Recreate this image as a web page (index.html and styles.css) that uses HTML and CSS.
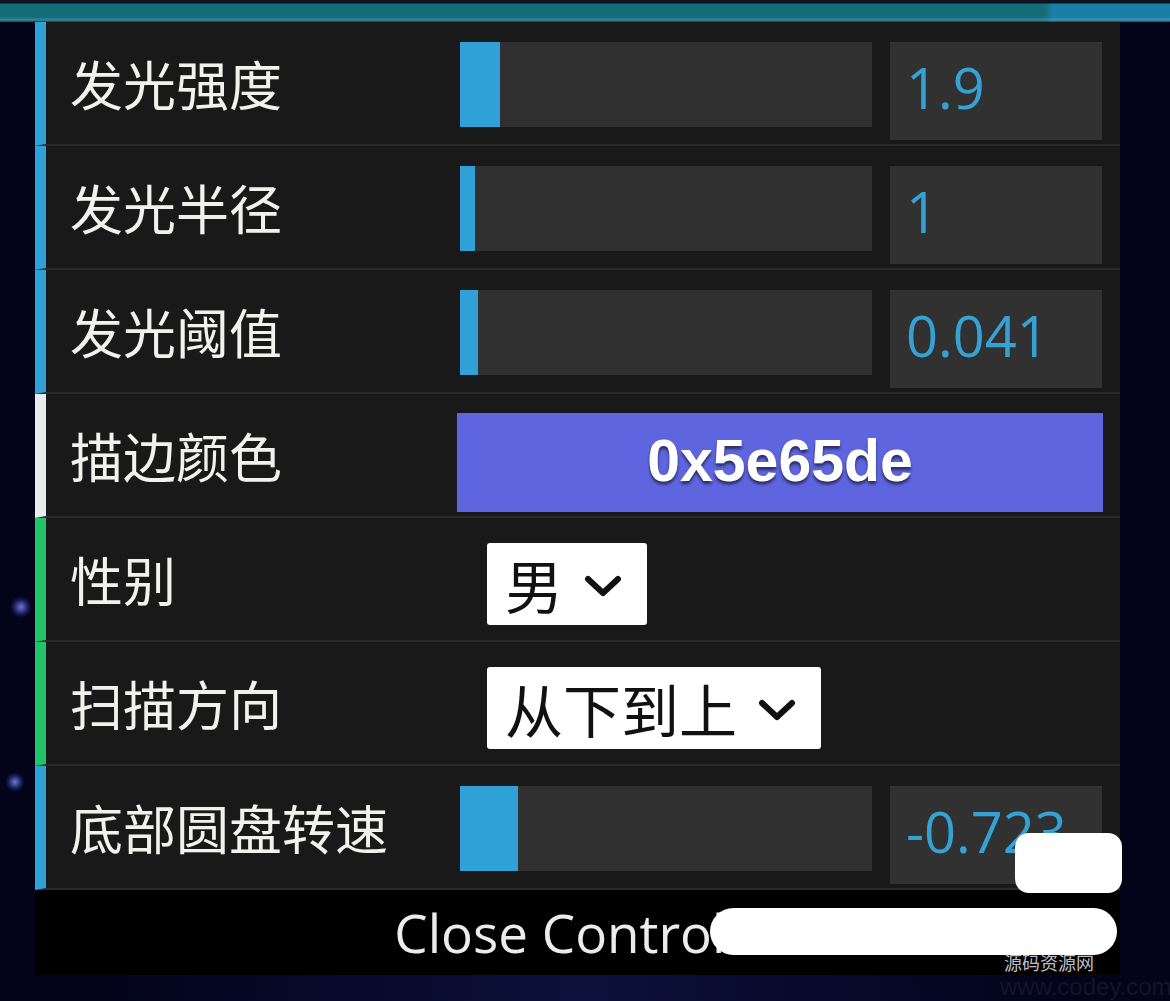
FILE: index.html
```html
<!DOCTYPE html>
<html lang="zh-CN">
<head>
<meta charset="utf-8">
<title>dat.GUI</title>
<link rel="stylesheet" href="styles.css">
</head>
<body>
<div class="stage">
  <div class="topband"></div>
  <span class="star star-a"></span>
  <span class="star star-b"></span>
  <div class="panel">
    <div class="row row-number">
      <div class="label">发光强度</div>
      <div class="ctrl">
        <div class="slider"><div class="fg" style="width:40px"></div></div>
        <div class="num">1.9</div>
      </div>
    </div>
    <div class="row row-number">
      <div class="label">发光半径</div>
      <div class="ctrl">
        <div class="slider"><div class="fg" style="width:15px"></div></div>
        <div class="num">1</div>
      </div>
    </div>
    <div class="row row-number">
      <div class="label">发光阈值</div>
      <div class="ctrl">
        <div class="slider"><div class="fg" style="width:18px"></div></div>
        <div class="num">0.041</div>
      </div>
    </div>
    <div class="row row-color">
      <div class="label">描边颜色</div>
      <div class="ctrl-color">
        <div class="swatch">0x5e65de</div>
      </div>
    </div>
    <div class="row row-option">
      <div class="label">性别</div>
      <div class="ctrl-select">
        <div class="select">男<svg class="chev" viewBox="0 0 40 24"><path d="M5 5 L20 19 L35 5" /></svg></div>
      </div>
    </div>
    <div class="row row-option">
      <div class="label">扫描方向</div>
      <div class="ctrl-select">
        <div class="select">从下到上<svg class="chev" viewBox="0 0 40 24"><path d="M5 5 L20 19 L35 5" /></svg></div>
      </div>
    </div>
    <div class="row row-number">
      <div class="label">底部圆盘转速</div>
      <div class="ctrl">
        <div class="slider"><div class="fg" style="width:58px"></div></div>
        <div class="num">-0.723</div>
      </div>
    </div>
    <div class="close">Close Controls</div>
  </div>
  <div class="cover cover-box"></div>
  <div class="cover cover-pill"></div>
  <div class="wm wm-cn">源码资源网</div>
  <div class="wm wm-url">www.codey.com</div>
</div>
</body>
</html>
```

FILE: styles.css
```css
html, body {
  margin: 0;
  padding: 0;
}
body {
  background: #04041c;
  width: 1170px;
  height: 1001px;
  overflow: hidden;
  font-family: "Noto Sans CJK SC", "Noto Sans", sans-serif;
}
.stage {
  position: relative;
  width: 1170px;
  height: 1001px;
  background:
    radial-gradient(ellipse at 50% 100%, rgba(30,40,120,0.35), rgba(0,0,0,0) 60%),
    #03031a;
}
.topband {
  height: 22px;
  background:
    linear-gradient(to bottom, rgba(11,20,32,1) 0, rgba(11,20,32,1) 3px, rgba(0,0,0,0) 4px, rgba(0,0,0,0) 17px, rgba(90,170,190,0.5) 20px, rgba(10,40,50,0.6) 22px),
    linear-gradient(to right, #136c78 0, #136c78 1045px, #1a7fa6 1052px, #1a7fa6 100%);
}
.star {
  position: absolute;
  border-radius: 50%;
  background: radial-gradient(circle, rgba(120,130,230,0.9) 0, rgba(60,70,180,0.4) 45%, rgba(0,0,0,0) 70%);
}
.star-a { left: 10px; top: 596px; width: 22px; height: 22px; }
.star-b { left: 5px; top: 772px; width: 20px; height: 20px; }

.panel {
  margin-left: 35px;
  width: 1085px;
}
.row {
  display: flex;
  height: 122px;
  background: #1a1919;
  border-bottom: 2px solid #2b2a2a;
  border-left: 11px solid #2fa1d6;
}
.row-color { border-left-color: #e9ecec; }
.row-option { border-left-color: #22c46a; }
.label {
  width: 387px;
  padding-left: 24px;
  flex: none;
  display: flex;
  align-items: center;
  font-size: 53px;
  color: #f1f1ee;
  white-space: nowrap;
}
.ctrl {
  display: flex;
  align-items: flex-start;
  gap: 18px;
  margin-left: 3px;
  padding-top: 20px;
}
.slider {
  width: 412px;
  height: 85px;
  background: #303030;
  display: flex;
}
.fg {
  background: #2fa1d6;
  height: 100%;
}
.num {
  width: 196px;
  height: 90px;
  padding: 0 0 8px 16px;
  background: #313131;
  color: #36a2d4;
  font-family: "Open Sans", "Liberation Sans", sans-serif;
  font-size: 56px;
  display: flex;
  align-items: center;
}
.ctrl-color {
  padding-top: 19px;
}
.swatch {
  width: 646px;
  height: 99px;
  background: #5e65de;
  color: #ffffff;
  font-family: "Liberation Sans", Arial, sans-serif;
  font-weight: bold;
  font-size: 59px;
  display: flex;
  align-items: center;
  justify-content: center;
  padding-bottom: 4px;
  box-sizing: border-box;
  text-shadow: 0 3px 3px rgba(0,0,0,0.55);
}
.ctrl-select {
  padding-top: 25px;
  padding-left: 30px;
}
.select {
  display: inline-flex;
  align-items: center;
  height: 82px;
  padding: 0 24px 0 18px;
  background: #ffffff;
  border-radius: 3px;
  color: #111;
  font-size: 58px;
  gap: 20px;
}
.chev {
  width: 40px;
  height: 24px;
  margin-top: 4px;
}
.chev path {
  fill: none;
  stroke: #111;
  stroke-width: 6;
  stroke-linecap: round;
  stroke-linejoin: round;
}
.close {
  height: 85px;
  background: #000;
  color: #ececec;
  font-family: "Open Sans", "Liberation Sans", sans-serif;
  font-size: 53px;
  display: flex;
  align-items: center;
  justify-content: center;
  padding-right: 10px;
}
.cover {
  position: absolute;
  background: #ffffff;
}
.cover-box {
  left: 1015px;
  top: 833px;
  width: 107px;
  height: 60px;
  border-radius: 14px;
}
.cover-pill {
  left: 710px;
  top: 908px;
  width: 407px;
  height: 47px;
  border-radius: 24px;
}
.wm {
  position: absolute;
  white-space: nowrap;
}
.wm-cn {
  left: 1004px;
  top: 952px;
  font-size: 18px;
  line-height: 20px;
  color: #bdbdc8;
}
.wm-url {
  left: 1000px;
  top: 974px;
  font-family: "Liberation Sans", Arial, sans-serif;
  font-size: 24px;
  line-height: 26px;
  color: #14142e;
}
```
